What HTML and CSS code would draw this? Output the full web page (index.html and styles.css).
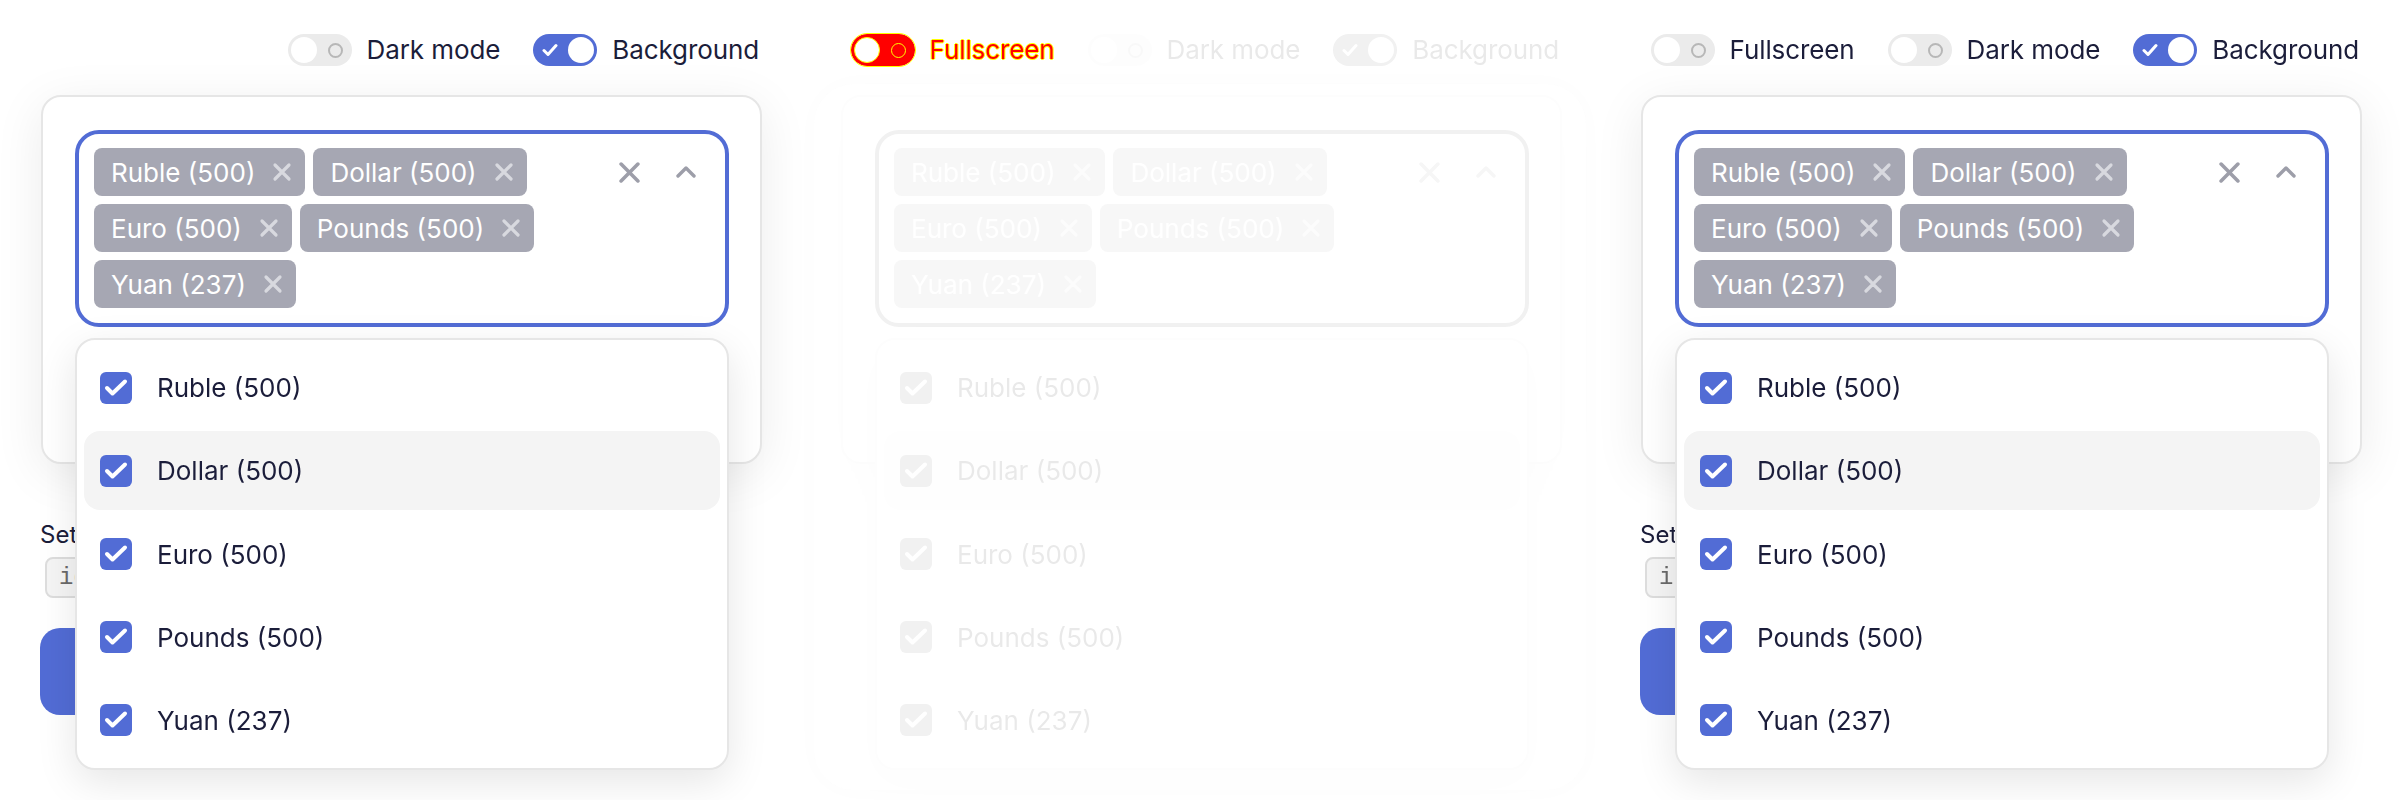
FILE: index.html
```html
<!DOCTYPE html>
<html lang="en">
<head>
<meta charset="utf-8">
<title>Multi select</title>
<link rel="stylesheet" href="styles.css">
</head>
<body>
<div class="page">

  <!-- Column 1 -->
  <section class="col">
    <div class="toggles">
      <div class="tg"><span class="sw off"><span class="knob"></span><span class="ring"></span></span><span class="tg-label">Dark mode</span></div>
      <div class="tg"><span class="sw on"><svg class="sw-check" viewBox="0 0 16 14"><path d="M2 7.5 L6 11.5 L14 2.5"/></svg><span class="knob"></span></span><span class="tg-label">Background</span></div>
    </div>
    <div class="card">
      <div class="select">
        <div class="tags">
          <span class="tag">Ruble (500)<svg class="tag-x" viewBox="0 0 20 20"><path d="M3 3 L17 17 M17 3 L3 17"/></svg></span>
          <span class="tag">Dollar (500)<svg class="tag-x" viewBox="0 0 20 20"><path d="M3 3 L17 17 M17 3 L3 17"/></svg></span>
          <span class="tag">Euro (500)<svg class="tag-x" viewBox="0 0 20 20"><path d="M3 3 L17 17 M17 3 L3 17"/></svg></span>
          <span class="tag">Pounds (500)<svg class="tag-x" viewBox="0 0 20 20"><path d="M3 3 L17 17 M17 3 L3 17"/></svg></span>
          <span class="tag">Yuan (237)<svg class="tag-x" viewBox="0 0 20 20"><path d="M3 3 L17 17 M17 3 L3 17"/></svg></span>
        </div>
        <div class="controls">
          <svg class="clear" viewBox="0 0 20 20"><path d="M2 2 L18 18 M18 2 L2 18"/></svg>
          <svg class="caret" viewBox="0 0 20 12"><path d="M2 10 L10 2 L18 10"/></svg>
        </div>
      </div>
    </div>
    <div class="below">
      <div class="below-label">Set value</div>
      <code class="code">ids</code>
      <button class="btn">Apply</button>
    </div>
    <div class="dropdown">
      <div class="opt"><span class="cb"><svg viewBox="0 0 32 32"><path d="M7 16 L12.5 21.5 L25 9.5"/></svg></span>Ruble (500)</div>
      <div class="opt hl"><span class="cb"><svg viewBox="0 0 32 32"><path d="M7 16 L12.5 21.5 L25 9.5"/></svg></span>Dollar (500)</div>
      <div class="opt"><span class="cb"><svg viewBox="0 0 32 32"><path d="M7 16 L12.5 21.5 L25 9.5"/></svg></span>Euro (500)</div>
      <div class="opt"><span class="cb"><svg viewBox="0 0 32 32"><path d="M7 16 L12.5 21.5 L25 9.5"/></svg></span>Pounds (500)</div>
      <div class="opt"><span class="cb"><svg viewBox="0 0 32 32"><path d="M7 16 L12.5 21.5 L25 9.5"/></svg></span>Yuan (237)</div>
    </div>
  </section>

  <!-- Column 2 (faded, fullscreen toggle in forced colours) -->
  <section class="col-stack">
    <div class="col layer faded">
      <div class="fs-panel"></div>
      <div class="toggles">
        <div class="tg ghost"><span class="sw off"><span class="knob"></span><span class="ring"></span></span><span class="tg-label">Fullscreen</span></div>
        <div class="tg"><span class="sw off"><span class="knob"></span><span class="ring"></span></span><span class="tg-label">Dark mode</span></div>
        <div class="tg"><span class="sw on"><svg class="sw-check" viewBox="0 0 16 14"><path d="M2 7.5 L6 11.5 L14 2.5"/></svg><span class="knob"></span></span><span class="tg-label">Background</span></div>
      </div>
      <div class="card">
        <div class="select">
          <div class="tags">
            <span class="tag">Ruble (500)<svg class="tag-x" viewBox="0 0 20 20"><path d="M3 3 L17 17 M17 3 L3 17"/></svg></span>
            <span class="tag">Dollar (500)<svg class="tag-x" viewBox="0 0 20 20"><path d="M3 3 L17 17 M17 3 L3 17"/></svg></span>
            <span class="tag">Euro (500)<svg class="tag-x" viewBox="0 0 20 20"><path d="M3 3 L17 17 M17 3 L3 17"/></svg></span>
            <span class="tag">Pounds (500)<svg class="tag-x" viewBox="0 0 20 20"><path d="M3 3 L17 17 M17 3 L3 17"/></svg></span>
            <span class="tag">Yuan (237)<svg class="tag-x" viewBox="0 0 20 20"><path d="M3 3 L17 17 M17 3 L3 17"/></svg></span>
          </div>
          <div class="controls">
            <svg class="clear" viewBox="0 0 20 20"><path d="M2 2 L18 18 M18 2 L2 18"/></svg>
            <svg class="caret" viewBox="0 0 20 12"><path d="M2 10 L10 2 L18 10"/></svg>
          </div>
        </div>
      </div>
      <div class="below">
        <div class="below-label">Set value</div>
        <code class="code">ids</code>
        <button class="btn">Apply</button>
      </div>
      <div class="dropdown">
        <div class="opt"><span class="cb"><svg viewBox="0 0 32 32"><path d="M7 16 L12.5 21.5 L25 9.5"/></svg></span>Ruble (500)</div>
        <div class="opt hl"><span class="cb"><svg viewBox="0 0 32 32"><path d="M7 16 L12.5 21.5 L25 9.5"/></svg></span>Dollar (500)</div>
        <div class="opt"><span class="cb"><svg viewBox="0 0 32 32"><path d="M7 16 L12.5 21.5 L25 9.5"/></svg></span>Euro (500)</div>
        <div class="opt"><span class="cb"><svg viewBox="0 0 32 32"><path d="M7 16 L12.5 21.5 L25 9.5"/></svg></span>Pounds (500)</div>
        <div class="opt"><span class="cb"><svg viewBox="0 0 32 32"><path d="M7 16 L12.5 21.5 L25 9.5"/></svg></span>Yuan (237)</div>
      </div>
    </div>
    <div class="col layer top-layer">
      <div class="toggles">
        <div class="tg forced"><span class="sw off"><span class="knob"></span><span class="ring"></span></span><span class="tg-label">Fullscreen</span></div>
        <div class="tg ghost"><span class="sw off"><span class="knob"></span><span class="ring"></span></span><span class="tg-label">Dark mode</span></div>
        <div class="tg ghost"><span class="sw on"><svg class="sw-check" viewBox="0 0 16 14"><path d="M2 7.5 L6 11.5 L14 2.5"/></svg><span class="knob"></span></span><span class="tg-label">Background</span></div>
      </div>
    </div>
  </section>

  <!-- Column 3 -->
  <section class="col">
    <div class="toggles">
      <div class="tg"><span class="sw off"><span class="knob"></span><span class="ring"></span></span><span class="tg-label">Fullscreen</span></div>
      <div class="tg"><span class="sw off"><span class="knob"></span><span class="ring"></span></span><span class="tg-label">Dark mode</span></div>
      <div class="tg"><span class="sw on"><svg class="sw-check" viewBox="0 0 16 14"><path d="M2 7.5 L6 11.5 L14 2.5"/></svg><span class="knob"></span></span><span class="tg-label">Background</span></div>
    </div>
    <div class="card">
      <div class="select">
        <div class="tags">
          <span class="tag">Ruble (500)<svg class="tag-x" viewBox="0 0 20 20"><path d="M3 3 L17 17 M17 3 L3 17"/></svg></span>
          <span class="tag">Dollar (500)<svg class="tag-x" viewBox="0 0 20 20"><path d="M3 3 L17 17 M17 3 L3 17"/></svg></span>
          <span class="tag">Euro (500)<svg class="tag-x" viewBox="0 0 20 20"><path d="M3 3 L17 17 M17 3 L3 17"/></svg></span>
          <span class="tag">Pounds (500)<svg class="tag-x" viewBox="0 0 20 20"><path d="M3 3 L17 17 M17 3 L3 17"/></svg></span>
          <span class="tag">Yuan (237)<svg class="tag-x" viewBox="0 0 20 20"><path d="M3 3 L17 17 M17 3 L3 17"/></svg></span>
        </div>
        <div class="controls">
          <svg class="clear" viewBox="0 0 20 20"><path d="M2 2 L18 18 M18 2 L2 18"/></svg>
          <svg class="caret" viewBox="0 0 20 12"><path d="M2 10 L10 2 L18 10"/></svg>
        </div>
      </div>
    </div>
    <div class="below">
      <div class="below-label">Set value</div>
      <code class="code">ids</code>
      <button class="btn">Apply</button>
    </div>
    <div class="dropdown">
      <div class="opt"><span class="cb"><svg viewBox="0 0 32 32"><path d="M7 16 L12.5 21.5 L25 9.5"/></svg></span>Ruble (500)</div>
      <div class="opt hl"><span class="cb"><svg viewBox="0 0 32 32"><path d="M7 16 L12.5 21.5 L25 9.5"/></svg></span>Dollar (500)</div>
      <div class="opt"><span class="cb"><svg viewBox="0 0 32 32"><path d="M7 16 L12.5 21.5 L25 9.5"/></svg></span>Euro (500)</div>
      <div class="opt"><span class="cb"><svg viewBox="0 0 32 32"><path d="M7 16 L12.5 21.5 L25 9.5"/></svg></span>Pounds (500)</div>
      <div class="opt"><span class="cb"><svg viewBox="0 0 32 32"><path d="M7 16 L12.5 21.5 L25 9.5"/></svg></span>Yuan (237)</div>
    </div>
  </section>

</div>
</body>
</html>
```

FILE: styles.css
```css
* { box-sizing: border-box; }

html, body {
  margin: 0;
  padding: 0;
  background: #ffffff;
}

body {
  font-family: Inter, "Noto Sans", sans-serif;
  color: #1b1d3a;
  width: 2400px;
  height: 800px;
  overflow: hidden;
}

.page {
  display: grid;
  grid-template-columns: repeat(3, 800px);
  height: 800px;
}

.col {
  position: relative;
  padding: 34px 38px 0 41px;
  height: 800px;
}

/* stacked layers of column 2 */
.col-stack {
  display: grid;
  height: 800px;
}
.layer {
  grid-area: 1 / 1;
}
.top-layer {
  z-index: 5;
}

/* ---------- toggles ---------- */
.toggles {
  display: flex;
  justify-content: flex-end;
  align-items: center;
  gap: 33px;
  height: 32px;
  padding-right: 3px;
  position: relative;
  z-index: 2;
  white-space: nowrap;
}

.tg {
  display: flex;
  align-items: center;
  gap: 15px;
  flex-shrink: 0;
}

.tg.ghost {
  visibility: hidden;
}

.tg-label {
  font-size: 26px;
  line-height: 32px;
  color: #1b1d3a;
  white-space: nowrap;
  letter-spacing: -0.1px;
}

.sw {
  width: 64px;
  height: 32px;
  border-radius: 16px;
  display: flex;
  align-items: center;
  justify-content: space-between;
  flex-shrink: 0;
}

.sw.off {
  background: #ebebeb;
  padding: 0 9px 0 3px;
}

.sw.on {
  background: #526cd5;
  padding: 0 3px 0 9px;
}

.knob {
  width: 26px;
  height: 26px;
  border-radius: 50%;
  background: #ffffff;
}

.ring {
  width: 15px;
  height: 15px;
  border-radius: 50%;
  border: 2px solid #b7b7b7;
}

.sw-check {
  width: 16px;
  height: 14px;
  fill: none;
  stroke: #ffffff;
  stroke-width: 3;
  stroke-linecap: round;
  stroke-linejoin: round;
}

/* forced colours fullscreen toggle */
.tg.forced .sw {
  background: #ff0000;
  outline: 1px solid #ffff00;
}
.tg.forced .knob {
  border: 1px solid #ffff00;
}
.tg.forced .ring {
  border: 1px solid #ffff00;
}
.tg.forced .tg-label {
  color: #ff0000;
  text-shadow: 1px 0 0 #ffff00, -1px 0 0 #ffff00, 0 1px 0 #ffff00, 0 -1px 0 #ffff00;
}

/* ---------- card ---------- */
.card {
  position: relative;
  margin-top: 29px;
  height: 369px;
  border: 2px solid #e6e6e6;
  border-radius: 20px;
  padding: 33px 31px 32px 32px;
  background: #ffffff;
  box-shadow: 0 10px 50px rgba(0, 0, 0, 0.08);
}

.select {
  display: flex;
  align-items: flex-start;
  border: 4px solid #526cd5;
  border-radius: 24px;
  padding: 14px 14px 15px 15px;
  min-height: 196px;
}

.tags {
  flex: 1;
  display: flex;
  flex-wrap: wrap;
  gap: 8px;
  align-content: flex-start;
  padding-right: 60px;
}

.tag {
  display: inline-flex;
  align-items: center;
  gap: 17px;
  height: 48px;
  padding: 0 13px 0 17px;
  border-radius: 8px;
  background: #a6a7b3;
  color: #ffffff;
  font-size: 26px;
  white-space: nowrap;
}

.tag-x {
  width: 20px;
  height: 20px;
  fill: none;
  stroke: #d8d9df;
  stroke-width: 3.2;
  stroke-linecap: round;
}

.controls {
  display: flex;
  align-items: center;
  gap: 36px;
  height: 48px;
  padding-right: 15px;
}

.clear {
  width: 21px;
  height: 21px;
  fill: none;
  stroke: #9d9ea9;
  stroke-width: 3.4;
  stroke-linecap: round;
}

.caret {
  width: 20px;
  height: 12px;
  fill: none;
  stroke: #9d9ea9;
  stroke-width: 3.4;
  stroke-linecap: round;
  stroke-linejoin: round;
}

/* ---------- content below the card ---------- */
.below {
  padding-top: 55px;
  display: flex;
  flex-direction: column;
  align-items: flex-start;
}

.below-label {
  font-size: 24px;
  line-height: 32px;
  margin-left: -1px;
}

.code {
  margin-top: 6px;
  margin-left: 4px;
  height: 41px;
  padding: 0 12px;
  display: flex;
  align-items: center;
  font-family: "Liberation Mono", "DejaVu Sans Mono", monospace;
  font-size: 24px;
  color: #6a6a6a;
  background: #f5f5f5;
  border: 2px solid #dddddd;
  border-radius: 8px;
}

.btn {
  margin-top: 30px;
  margin-left: -1px;
  width: 300px;
  height: 87px;
  border: none;
  border-radius: 20px;
  background: #526cd5;
  color: #ffffff;
  font-family: Inter, sans-serif;
  font-size: 26px;
}

/* ---------- dropdown (overlay) ---------- */
.dropdown {
  position: absolute;
  top: 338px;
  left: 75px;
  width: 654px;
  height: 432px;
  background: #ffffff;
  border: 2px solid #e6e6e6;
  border-radius: 20px;
  padding: 8px 7px;
  display: flex;
  flex-direction: column;
  gap: 4px;
  box-shadow: 0 12px 40px rgba(0, 0, 0, 0.10);
  z-index: 3;
}

.opt {
  height: 80px;
  display: flex;
  align-items: center;
  gap: 25px;
  padding-left: 16px;
  border-radius: 16px;
  font-size: 26px;
  color: #1b1d3a;
}

.opt.hl {
  background: #f4f4f4;
}

.cb {
  width: 32px;
  height: 32px;
  border-radius: 6px;
  background: #526cd5;
  display: flex;
}

.cb svg {
  width: 32px;
  height: 32px;
  fill: none;
  stroke: #ffffff;
  stroke-width: 4;
  stroke-linecap: round;
  stroke-linejoin: round;
}

/* ---------- faded column ---------- */
.faded {
  opacity: 0.1;
  filter: grayscale(1);
}

.fs-panel {
  position: absolute;
  top: 84px;
  left: 14px;
  right: 14px;
  bottom: 10px;
  border-radius: 40px;
  box-shadow: 0 0 30px rgba(0, 0, 0, 0.15);
  background: #ffffff;
}
```
